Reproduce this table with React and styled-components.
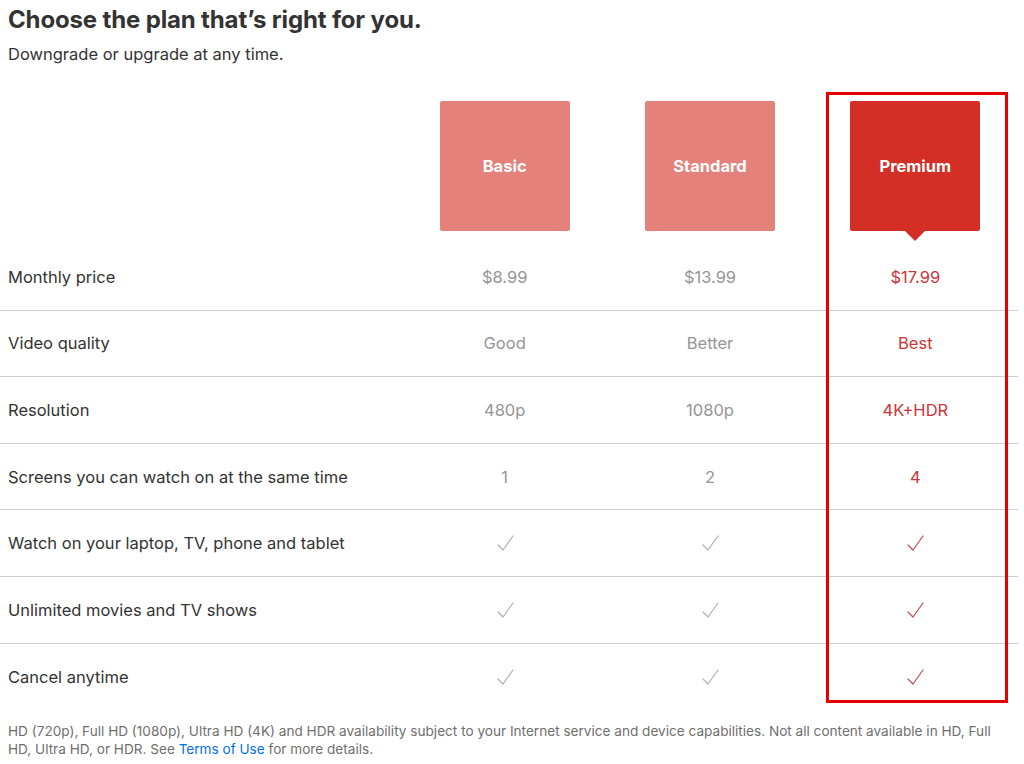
import styled, { createGlobalStyle } from "styled-components";

const GlobalStyle = createGlobalStyle`
  body {
    margin: 0;
    background: #fff;
    font-family: Inter, "Liberation Sans", Arial, sans-serif;
    color: #333;
  }
`;

const plans = [
  { name: "Basic", price: "$8.99", quality: "Good", resolution: "480p", screens: "1" },
  { name: "Standard", price: "$13.99", quality: "Better", resolution: "1080p", screens: "2" },
  { name: "Premium", price: "$17.99", quality: "Best", resolution: "4K+HDR", screens: "4", selected: true },
];

const features = [
  { label: "Monthly price", key: "price" },
  { label: "Video quality", key: "quality" },
  { label: "Resolution", key: "resolution" },
  { label: "Screens you can watch on at the same time", key: "screens" },
  { label: "Watch on your laptop, TV, phone and tablet", check: true },
  { label: "Unlimited movies and TV shows", check: true },
  { label: "Cancel anytime", check: true },
];

const Page = styled.div`
  position: relative;
  width: 1024px;
  height: 764px;
  overflow: hidden;
`;

const Header = styled.header`
  padding: 4px 0 0 8px;
`;

const Title = styled.h1`
  margin: 0;
  font-size: 24px;
  line-height: 32px;
  font-weight: 700;
  letter-spacing: -0.15px;
  color: #333;
`;

const Subtitle = styled.p`
  margin: 8px 0 0;
  font-size: 16.5px;
  line-height: 20px;
  color: #333;
`;

const Table = styled.div`
  width: 1018px;
  margin-top: 37px;
`;

const Row = styled.div`
  display: grid;
  grid-template-columns: 402px repeat(3, 1fr);
  align-items: center;
  height: ${(p) => p.$height || "66.6px"};
  box-sizing: border-box;
  border-bottom: ${(p) => (p.$divider ? "1px solid #cfcfcf" : "none")};
`;

const HeaderRow = styled(Row)`
  align-items: start;
`;

const Label = styled.div`
  padding-left: 8px;
  font-size: 16.5px;
  color: #333;
`;

const Cell = styled.div`
  display: flex;
  justify-content: center;
  align-items: center;
  font-size: 16.5px;
  color: ${(p) => (p.$selected ? "#cc3439" : "#959595")};
`;

const PlanBox = styled.div`
  position: relative;
  width: 130px;
  height: 130px;
  margin: 0 auto;
  border-radius: 2px;
  display: flex;
  align-items: center;
  justify-content: center;
  color: #fff;
  font-size: 16.5px;
  font-weight: 700;
  background: ${(p) => (p.$selected ? "#d32f27" : "#e5817b")};

  &::after {
    content: "";
    display: ${(p) => (p.$selected ? "block" : "none")};
    position: absolute;
    left: 50%;
    bottom: -10px;
    transform: translateX(-50%);
    border-left: 10px solid transparent;
    border-right: 10px solid transparent;
    border-top: 10px solid #d32f27;
  }
`;

const Highlight = styled.div`
  position: absolute;
  left: 826px;
  top: 92px;
  width: 182px;
  height: 611px;
  box-sizing: border-box;
  border: 3px solid #e60000;
  pointer-events: none;
`;

const Footer = styled.p`
  margin: 12px 0 0;
  padding: 0 20px 0 8px;
  font-size: 13.6px;
  line-height: 18px;
  color: #6f6f6f;
`;

const TermsLink = styled.a`
  color: #0071eb;
  text-decoration: none;
`;

function Check({ selected }) {
  return (
    <svg width="22" height="18" viewBox="0 0 22 18" fill="none">
      <polyline
        points="4,11 9,16 19,2"
        stroke={selected ? "#bf4a50" : "#b0b0b0"}
        strokeWidth="1.2"
        strokeLinecap="round"
        strokeLinejoin="round"
      />
    </svg>
  );
}

export default function App() {
  return (
    <Page>
      <GlobalStyle />
      <Header>
        <Title>Choose the plan that’s right for you.</Title>
        <Subtitle>Downgrade or upgrade at any time.</Subtitle>
      </Header>
      <Table>
        <HeaderRow $height="143px">
          <div />
          {plans.map((plan) => (
            <PlanBox key={plan.name} $selected={plan.selected}>
              {plan.name}
            </PlanBox>
          ))}
        </HeaderRow>
        {features.map((f, i) => (
          <Row key={f.label} $divider={i < features.length - 1}>
            <Label>{f.label}</Label>
            {plans.map((plan) => (
              <Cell key={plan.name} $selected={plan.selected}>
                {f.check ? <Check selected={plan.selected} /> : plan[f.key]}
              </Cell>
            ))}
          </Row>
        ))}
      </Table>
      <Footer>
        HD (720p), Full HD (1080p), Ultra HD (4K) and HDR availability subject to your
        Internet service and device capabilities. Not all content available in HD, Full HD,
        Ultra HD, or HDR. See <TermsLink href="#">Terms of Use</TermsLink> for more details.
      </Footer>
      <Highlight />
    </Page>
  );
}
